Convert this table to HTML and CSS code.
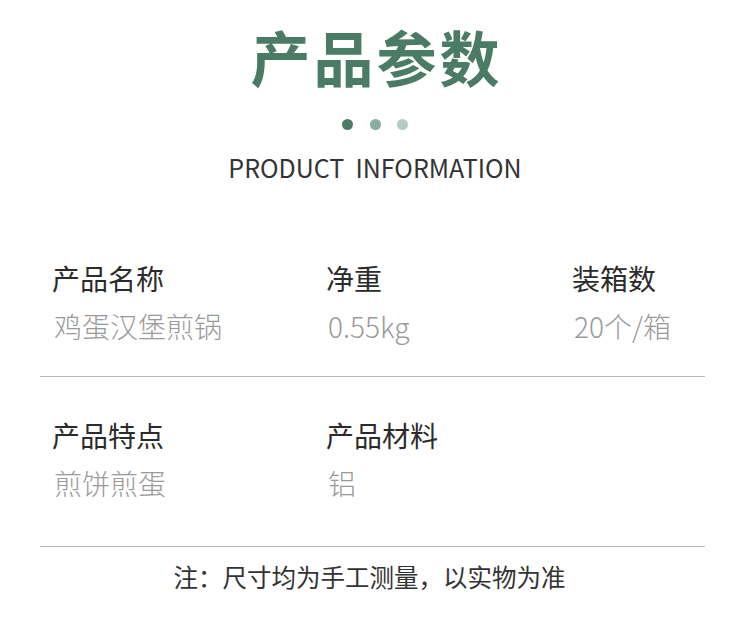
FILE: index.html
```html
<!DOCTYPE html>
<html lang="zh-CN">
<head>
<meta charset="utf-8">
<title>产品参数</title>
<link rel="stylesheet" href="styles.css">
</head>
<body>
<div class="page">
  <header class="head">
    <h1 class="title">产品参数</h1>
    <div class="dots">
      <span class="dot dot-1"></span>
      <span class="dot dot-2"></span>
      <span class="dot dot-3"></span>
    </div>
    <p class="subtitle">PRODUCT&nbsp; INFORMATION</p>
  </header>
  <section class="params">
    <div class="row row-1">
      <div class="cell">
        <div class="label">产品名称</div>
        <div class="value">鸡蛋汉堡煎锅</div>
      </div>
      <div class="cell">
        <div class="label">净重</div>
        <div class="value">0.55kg</div>
      </div>
      <div class="cell">
        <div class="label">装箱数</div>
        <div class="value">20个/箱</div>
      </div>
    </div>
    <div class="row row-2">
      <div class="cell">
        <div class="label">产品特点</div>
        <div class="value">煎饼煎蛋</div>
      </div>
      <div class="cell">
        <div class="label">产品材料</div>
        <div class="value">铝</div>
      </div>
      <div class="cell"></div>
    </div>
  </section>
  <p class="note">注：尺寸均为手工测量，以实物为准</p>
</div>
</body>
</html>
```

FILE: styles.css
```css
* { box-sizing: border-box; }
html, body {
  margin: 0;
  padding: 0;
  background: #ffffff;
}
body {
  font-family: "Noto Sans CJK SC", "Noto Sans", sans-serif;
  color: #333333;
}
.page {
  width: 750px;
  height: 624px;
  overflow: hidden;
  padding-top: 25.5px;
}
.head {
  display: flex;
  flex-direction: column;
  align-items: center;
}
.title {
  margin: 0;
  font-size: 60px;
  line-height: 60px;
  font-weight: 700;
  color: #4a7b66;
  letter-spacing: 3px;
  padding-left: 3px;
}
.dots {
  margin-top: 33.5px;
  display: flex;
  gap: 16.5px;
}
.dot {
  width: 11px;
  height: 11px;
  border-radius: 50%;
}
.dot-1 { background: #4a7b66; }
.dot-2 { background: #8aab9d; }
.dot-3 { background: #b3ccc2; }
.subtitle {
  margin: 24.5px 0 0;
  font-size: 25px;
  line-height: 25px;
  font-weight: 400;
  color: #333333;
}
.params {
  margin: 84px 45px 0 40px;
}
.row {
  display: grid;
  grid-template-columns: 274px 246px 1fr;
  padding-left: 12px;
  border-bottom: 1px solid #b8b8b8;
}
.row-1 { padding-bottom: 36px; }
.row-2 { padding-top: 43.5px; padding-bottom: 49px; }
.label {
  font-size: 28px;
  line-height: 28px;
  font-weight: 400;
  color: #2b2b2b;
}
.value {
  margin-top: 20.5px;
  padding-left: 2px;
  font-size: 28px;
  line-height: 28px;
  font-weight: 300;
  color: #9a9a9a;
}
.note {
  margin: 17.5px 0 0;
  padding-right: 11px;
  text-align: center;
  font-size: 24.5px;
  line-height: 24.5px;
  font-weight: 400;
  color: #333333;
}
```
